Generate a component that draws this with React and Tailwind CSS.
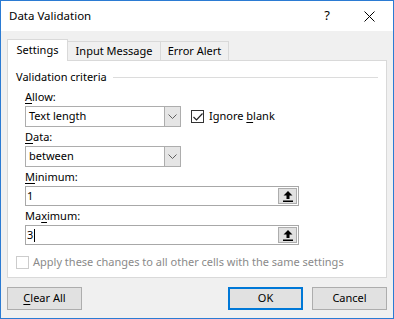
import React from "react";

const font = { fontFamily: '"Noto Sans", "Liberation Sans", sans-serif' };

const Chevron = () => (
  <svg width="9" height="6" viewBox="0 0 9 6" className="block">
    <polyline points="0.5,0.5 4.5,4.5 8.5,0.5" fill="none" stroke="#606060" strokeWidth="1" />
  </svg>
);

const UpArrow = () => (
  <svg width="10" height="11" viewBox="0 0 10 11" className="block">
    <path d="M5 0 L9.5 4.5 L6.5 4.5 L6.5 8 L3.5 8 L3.5 4.5 L0.5 4.5 Z" fill="#000" />
    <rect x="0" y="9.5" width="10" height="1.5" fill="#000" />
  </svg>
);

const Combo = ({ value }) => (
  <div className="flex h-[21px] w-[156px] border border-[#adadad] bg-white">
    <div className="flex flex-1 items-center pl-[3px] text-black">{value}</div>
    <div className="flex w-[16px] items-center justify-center border-l border-[#adadad] bg-[#e5e5e5]">
      <Chevron />
    </div>
  </div>
);

const Field = ({ value, caret }) => (
  <div className="flex h-[20px] w-[274px] border border-[#a8a8a8] bg-white">
    <div className="flex flex-1 items-center pl-[1px] text-black">
      {value}
      {caret && <span className="ml-[1px] inline-block h-[13px] w-[1px] bg-black" />}
    </div>
    <div className="m-[1px] flex w-[19px] items-center justify-center border border-[#adadad] bg-[#e1e1e1]">
      <UpArrow />
    </div>
  </div>
);

const Label = ({ pre, u, post }) => (
  <div className="h-[16px] leading-[16px] text-black">
    {pre}
    <span className="underline underline-offset-2">{u}</span>
    {post}
  </div>
);

export default function App() {
  return (
    <div
      style={font}
      className="flex h-[319px] w-[394px] flex-col border border-[#2b7bd3] bg-[#f0f0f0] text-[11px]"
    >
      {/* Title bar */}
      <div className="flex h-[30px] items-center bg-white pl-[8px]">
        <span className="flex-1 text-[11.5px] text-black">Data Validation</span>
        <span className="w-[20px] text-center text-[13px] text-black">?</span>
        <span className="ml-[20px] mr-[12px] flex w-[24px] justify-center">
          <svg width="11" height="11" viewBox="0 0 11 11">
            <path d="M0.5 0.5 L10.5 10.5 M10.5 0.5 L0.5 10.5" stroke="#000" strokeWidth="1" />
          </svg>
        </span>
      </div>

      {/* Tabs */}
      <div className="mt-[8px] flex h-[21px] items-end pl-[6px]">
        <div className="relative z-10 -mb-[1px] flex h-[22px] w-[61px] items-center justify-center border border-b-0 border-[#d9d9d9] bg-white pb-[1px]">
          Settings
        </div>
        <div className="flex h-[19px] w-[93px] items-center justify-center border border-b-0 border-l-0 border-[#d9d9d9] bg-[#f0f0f0]">
          Input Message
        </div>
        <div className="flex h-[19px] w-[68px] items-center justify-center border border-b-0 border-l-0 border-[#d9d9d9] bg-[#f0f0f0]">
          Error Alert
        </div>
      </div>

      {/* Panel */}
      <div className="mx-[6px] flex h-[218px] flex-col border border-[#d9d9d9] bg-white px-[8px] pt-[8px]">
        <div className="flex h-[16px] items-center">
          <span className="text-black">Validation criteria</span>
          <div className="ml-[6px] h-[1px] flex-1 bg-[#dcdcdc]" />
        </div>

        <div className="ml-[9px] mt-[4px] flex flex-col">
          <Label u="A" post="llow:" />
          <div className="mt-[1px] flex items-center">
            <Combo value="Text length" />
            <div className="ml-[10px] flex items-center">
              <div className="flex h-[13px] w-[13px] items-center justify-center border border-[#333] bg-white">
                <svg width="10" height="8" viewBox="0 0 10 8">
                  <polyline points="0.5,4 3.5,7 9.5,0.5" fill="none" stroke="#222" strokeWidth="1.2" />
                </svg>
              </div>
              <span className="ml-[5px] text-black">
                Ignore <span className="underline underline-offset-2">b</span>lank
              </span>
            </div>
          </div>

          <div className="mt-[2px]">
            <Label u="D" post="ata:" />
          </div>
          <div className="mt-[1px]">
            <Combo value="between" />
          </div>

          <div className="mt-[2px]">
            <Label u="M" post="inimum:" />
          </div>
          <div className="mt-[1px]">
            <Field value="1" />
          </div>

          <div className="mt-[2px]">
            <Label pre="Ma" u="x" post="imum:" />
          </div>
          <div className="mt-[1px]">
            <Field value="3" caret />
          </div>
        </div>

        <div className="mt-[9px] flex items-center">
          <div className="h-[13px] w-[13px] border border-[#cccccc] bg-white" />
          <span className="ml-[4px] text-[#8a8a8a]">
            Apply these changes to all other cells with the same settings
          </span>
        </div>
      </div>

      {/* Buttons */}
      <div className="mt-[9px] flex px-[6px]">
        <button className="flex h-[23px] w-[75px] items-center justify-center border border-[#adadad] bg-[#e1e1e1] text-black">
          <span>
            <span className="underline underline-offset-2">C</span>lear All
          </span>
        </button>
        <div className="flex-1" />
        <button className="flex h-[23px] w-[75px] items-center justify-center border-2 border-[#0078d7] bg-[#e1e1e1] text-black">
          OK
        </button>
        <button className="ml-[9px] flex h-[23px] w-[75px] items-center justify-center border border-[#adadad] bg-[#e1e1e1] text-black">
          Cancel
        </button>
      </div>
    </div>
  );
}
